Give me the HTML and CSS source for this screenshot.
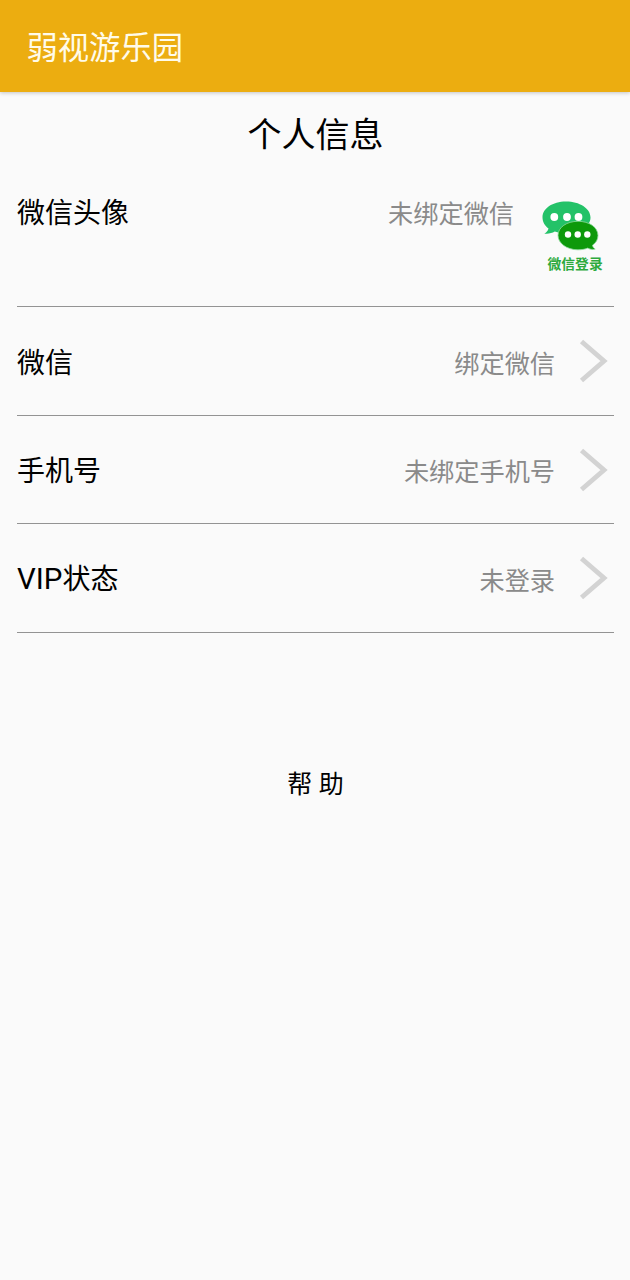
FILE: index.html
```html
<!DOCTYPE html>
<html lang="zh-CN">
<head>
<meta charset="utf-8">
<title>弱视游乐园</title>
<link rel="stylesheet" href="styles.css">
</head>
<body>
<header class="app-bar">弱视游乐园</header>
<main class="profile">
  <h1 class="heading">个人信息</h1>
  <section class="row row-avatar">
    <span class="label">微信头像</span>
    <span class="value">未绑定微信</span>
    <svg class="wechat" viewBox="0 0 90 90" width="90" height="90">
      <path fill="#23c268" d="M36 11.500c-13.500 0-23.500 7-23.500 15.800 0 4.800 2.400 8.500 6 11.200-.7 2.400-2 4.100-4.200 5.100 4 .6 7.500-.3 10.500-2 3.300 1.200 7 1.800 11.200 1.800 13.500 0 24.500-7 24.500-16S49.500 11.500 36 11.500z"/>
      <g fill="#fff"><circle cx="24.300" cy="27" r="3.900"/><circle cx="37" cy="27" r="3.900"/><circle cx="48.500" cy="27" r="3.900"/></g>
      <path fill="#0d990b" stroke="#8edb9d" stroke-width=".8" d="M48 31.300c-11.200 0-20 6-20 14s8.800 14.500 20 14.500c3.700 0 7-.6 9.700-1.700 2.400 1.300 4.800 1.700 7.500 1-1.600-1-2.400-2.200-2.700-3.900 3.500-2.400 5.500-5.700 5.500-9.700 0-8.200-8.800-14.200-20-14.200z"/>
      <g fill="#fff"><circle cx="38" cy="44.500" r="3.200"/><circle cx="47.700" cy="44.500" r="3.200"/><circle cx="57.300" cy="44.500" r="3.200"/></g>
      <text class="wechat-text" x="17.500" y="79.300">微信登录</text>
    </svg>
  </section>
  <section class="row">
    <span class="label">微信</span><span class="value">绑定微信</span>
    <svg class="chevron" viewBox="0 0 30 44"><path d="M2.500 2.500 25 22 2.500 41.500"/></svg>
  </section>
  <section class="row">
    <span class="label">手机号</span><span class="value">未绑定手机号</span>
    <svg class="chevron" viewBox="0 0 30 44"><path d="M2.500 2.500 25 22 2.500 41.500"/></svg>
  </section>
  <section class="row">
    <span class="label"><span class="latin">VIP</span>状态</span><span class="value">未登录</span>
    <svg class="chevron" viewBox="0 0 30 44"><path d="M2.500 2.500 25 22 2.500 41.500"/></svg>
  </section>
  <div class="help">帮 助</div>
</main>
</body>
</html>
```
FILE: styles.css
```css
* { box-sizing: border-box; }
body {
  margin: 0;
  min-height: 1280px;
  background: #fafafa;
  color: #000;
  font-family: "Noto Sans CJK SC", sans-serif;
}
.app-bar {
  height: 92px;
  padding-left: 26.500px;
  background: #ecad10;
  color: #fffbea;
  font-size: 31.300px;
  line-height: 91px;
  box-shadow: 0 1px 4px rgba(0, 0, 0, .22);
}
.profile { padding: 0 16px 0 17px; }
.heading {
  margin: 0;
  height: 92px;
  padding-top: 16px;
  font-size: 34px;
  font-weight: 400;
  line-height: 50px;
  text-align: center;
}
.row {
  display: flex;
  align-items: center;
  height: 108.500px;
  border-bottom: 1px solid #939393;
}
.row-avatar {
  align-items: flex-start;
  height: 123px;
}
.label {
  flex: 1;
  font-size: 28px;
  line-height: 40px;
}
.latin {
  font-family: Roboto, sans-serif;
  font-size: 29.500px;
}
.value {
  padding-top: 2px;
  color: #8a8a8a;
  font-size: 25.200px;
  line-height: 40px;
}
.row-avatar .label { padding-top: 7px; }
.row-avatar .value { padding-top: 8px; }
.wechat {
  margin: 6px -6px 0 16px;
}
.wechat-text {
  fill: #2daa3d;
  font-size: 13.800px;
  font-weight: 700;
}
.chevron {
  width: 30px;
  height: 44px;
  margin: 1px 5px 0 24px;
  fill: none;
  stroke: #d3d3d3;
  stroke-width: 4.800;
}
.help {
  margin-top: 129px;
  font-size: 25px;
  line-height: 40px;
  text-align: center;
  word-spacing: 1px;
}
```
